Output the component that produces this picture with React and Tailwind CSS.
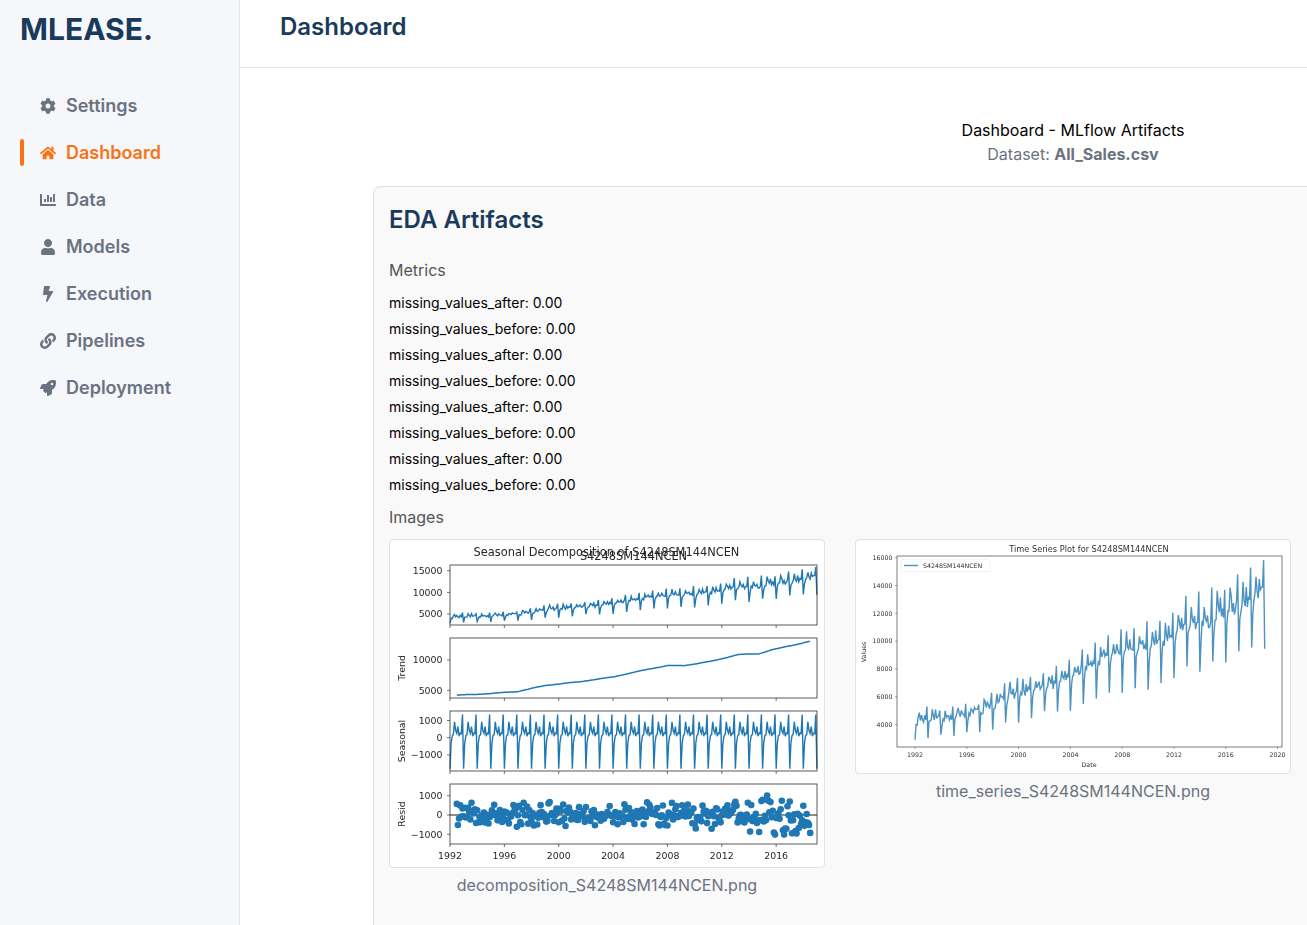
import React from 'react';
import { FaCog, FaHome, FaChartBar, FaUser, FaBolt, FaLink, FaRocket } from 'react-icons/fa';

const navItems = [
  { label: 'Settings', icon: FaCog },
  { label: 'Dashboard', icon: FaHome, active: true },
  { label: 'Data', icon: FaChartBar },
  { label: 'Models', icon: FaUser },
  { label: 'Execution', icon: FaBolt },
  { label: 'Pipelines', icon: FaLink },
  { label: 'Deployment', icon: FaRocket },
];

const metrics = Array.from({ length: 8 }, (_, i) =>
  i % 2 === 0 ? 'missing_values_after: 0.00' : 'missing_values_before: 0.00'
);

// fake-but-stable monthly series, Jan 1992 to Jan 2019
const BLUE = '#1f77b4';
const seasonalShape = [-1800, -320, 120, 180, 920, 420, 250, 640, 90, 270, 240, 1350];
const trendKnots = [
  [1992, 4150], [1995, 4450], [1996, 4650], [1997, 4800], [1999, 5800], [2001.5, 6400],
  [2004, 7200], [2006, 8200], [2008, 9100], [2009.2, 9050], [2011.5, 9900], [2013.2, 10900],
  [2014.7, 11000], [2015.7, 11700], [2017, 12300], [2018.5, 13100], [2019, 13300],
];

function trendAt(year) {
  for (let i = 1; i < trendKnots.length; i++) {
    const [x0, y0] = trendKnots[i - 1];
    const [x1, y1] = trendKnots[i];
    if (year <= x1) return y0 + ((y1 - y0) * (year - x0)) / (x1 - x0);
  }
  return 13300;
}

let seed = 4248;
function rand() {
  seed = (seed * 16807) % 2147483647;
  return seed / 2147483647;
}

const series = Array.from({ length: 325 }, (_, i) => {
  const year = 1992 + i / 12;
  const spread = year > 2014 ? 1250 : year > 2009 ? 800 : 720;
  const resid = (rand() + rand() - 1) * spread;
  const trend = trendAt(year);
  const season = seasonalShape[i % 12];
  return { year, trend, season, resid, value: trend + (season * trend) / 6500 + resid * 0.55 };
});

function linePath(points) {
  return points.map(([x, y], i) => `${i ? 'L' : 'M'}${x.toFixed(1)} ${y.toFixed(1)}`).join('');
}

const xDecomp = (year) => 450 + (year - 1992) * 13.59;

function Panel({ top, yTicks, label, labelX = 405, withYearLabels, children }) {
  const years = [1992, 1996, 2000, 2004, 2008, 2012, 2016];
  return (
    <g fontFamily="DejaVu Sans, sans-serif" fontSize="9.4" fill="#262626">
      {children}
      <rect x="450" y={top} width="367" height="60" fill="none" stroke="#333" strokeWidth="0.8" />
      {yTicks.map(([text, y]) => (
        <g key={text}>
          <line x1="447" x2="450" y1={y} y2={y} stroke="#333" strokeWidth="0.7" />
          <text x="442.5" y={y + 3.4} textAnchor="end">{text}</text>
        </g>
      ))}
      {years.map((year) => (
        <g key={year}>
          <line x1={xDecomp(year)} x2={xDecomp(year)} y1={top + 60} y2={top + 63} stroke="#333" strokeWidth="0.7" />
          {withYearLabels && (
            <text x={xDecomp(year)} y={top + 74.5} textAnchor="middle">{year}</text>
          )}
        </g>
      ))}
      {label && (
        <text transform={`translate(${labelX} ${top + 30}) rotate(-90)`} textAnchor="middle">{label}</text>
      )}
    </g>
  );
}

function DecompositionChart() {
  const observed = series.map((d) => [xDecomp(d.year), 614 - ((d.value - 5000) / 1000) * 4.33]);
  const trend = series
    .filter((d) => d.year >= 1992.5 && d.year <= 2018.5)
    .map((d) => [xDecomp(d.year), 690.3 - ((d.trend + 25 * Math.sin(d.year * 2.4) - 5000) / 1000) * 6.07]);
  const seasonal = series.map((d) => [xDecomp(d.year), 737.7 - (d.season / 1000) * 17.2]);
  const resid = series.slice(6, 319);

  return (
    <svg viewBox="390 540 434 327" className="block w-full [filter:blur(0.25px)]">
      <g fontFamily="DejaVu Sans, sans-serif" fontSize="11.4" fill="#262626">
        <text x="606.5" y="556" textAnchor="middle">Seasonal Decomposition of S4248SM144NCEN</text>
        <text x="633.5" y="560" textAnchor="middle">S4248SM144NCEN</text>
      </g>
      <Panel top={565} yTicks={[['15000', 570.7], ['10000', 592.4], ['5000', 614]]}>
        <path d={linePath(observed)} fill="none" stroke={BLUE} strokeWidth="1.4" />
      </Panel>
      <Panel top={638} label="Trend" yTicks={[['10000', 660], ['5000', 690.3]]}>
        <path d={linePath(trend)} fill="none" stroke={BLUE} strokeWidth="1.5" />
      </Panel>
      <Panel top={711} label="Seasonal" yTicks={[['1000', 720.5], ['0', 737.7], ['\u22121000', 754.9]]}>
        <path d={linePath(seasonal)} fill="none" stroke={BLUE} strokeWidth="1.4" />
      </Panel>
      <Panel top={784} label="Resid" withYearLabels yTicks={[['1000', 795.8], ['0', 815], ['\u22121000', 834.2]]}>
        <line x1="450" x2="817" y1="815" y2="815" stroke="#000" strokeWidth="0.9" />
        {resid.map((d) => (
          <circle
            key={d.year}
            cx={xDecomp(d.year)}
            cy={Math.min(842, Math.max(786, 815 - (d.resid / 1000) * 19.2))}
            r="3.3"
            fill={BLUE}
          />
        ))}
      </Panel>
    </svg>
  );
}

function TimeSeriesChart() {
  const xYear = (year) => 915 + (year - 1992) * 12.95;
  const yVal = (v) => 724.7 - ((v - 4000) / 1000) * 13.92;
  const line = series.map((d) => [xYear(d.year), yVal(d.value)]);
  const years = [1992, 1996, 2000, 2004, 2008, 2012, 2016, 2020];
  const values = [4000, 6000, 8000, 10000, 12000, 14000, 16000];

  return (
    <svg viewBox="856 540 434 233" className="block w-full [filter:blur(0.25px)]">
      <g fontFamily="DejaVu Sans, sans-serif" fontSize="6.3" fill="#333">
        <text x="1089" y="551.5" textAnchor="middle" fontSize="8.2">Time Series Plot for S4248SM144NCEN</text>
        <path d={linePath(line)} fill="none" stroke={BLUE} strokeOpacity="0.8" strokeWidth="1.4" />
        <rect x="897" y="556" width="385" height="191" fill="none" stroke="#444" strokeWidth="0.7" />
        {values.map((v) => (
          <g key={v}>
            <line x1="895" x2="897" y1={yVal(v)} y2={yVal(v)} stroke="#444" strokeWidth="0.5" />
            <text x="892.5" y={yVal(v) + 2.3} textAnchor="end">{v}</text>
          </g>
        ))}
        {years.map((year) => (
          <g key={year}>
            <line x1={xYear(year)} x2={xYear(year)} y1="747" y2="749" stroke="#444" strokeWidth="0.5" />
            <text x={xYear(year)} y="757" textAnchor="middle">{year}</text>
          </g>
        ))}
        <text x="1089" y="767" textAnchor="middle">Date</text>
        <text transform="translate(866 652) rotate(-90)" textAnchor="middle">Values</text>
        <rect x="901" y="559.5" width="89" height="12" rx="1" fill="#fff" stroke="#e5e5e5" strokeWidth="0.5" />
        <line x1="904" x2="918" y1="565.5" y2="565.5" stroke={BLUE} strokeOpacity="0.8" strokeWidth="1.4" />
        <text x="923" y="568">S4248SM144NCEN</text>
      </g>
    </svg>
  );
}

function ImageCard({ caption, children }) {
  return (
    <figure>
      <div className="bg-white border border-[#e0e0e0] rounded overflow-hidden">{children}</div>
      <figcaption className="mt-[5px] text-center text-base text-[#6b7280]">{caption}</figcaption>
    </figure>
  );
}

export default function App() {
  return (
    <div className="h-screen w-full flex overflow-hidden bg-white font-['Inter',sans-serif]">
      <aside className="w-[240px] shrink-0 bg-[#f5f7fb] border-r border-[#e5e7eb] px-5">
        <div className="text-[30px] leading-9 font-bold text-[#1a3a5c] mt-[11px] mb-[45px]">MLEASE.</div>
        <nav className="flex flex-col gap-5">
          {navItems.map(({ label, icon: Icon, active }) => (
            <a
              key={label}
              className={`relative flex items-center gap-[10px] h-[27px] pl-5 text-lg font-semibold ${
                active ? 'text-[#f97316]' : 'text-[#6b7280]'
              }`}
            >
              {active && <span className="absolute left-0 top-0 h-[27px] w-1 rounded bg-[#f97316]" />}
              <Icon className="w-4 h-4 shrink-0" />
              {label}
            </a>
          ))}
        </nav>
      </aside>

      <div className="flex-1 min-w-0">
        <header className="h-[68px] border-b border-[#e5e7eb] px-10 pt-[9px]">
          <h1 className="text-2xl leading-9 font-semibold text-[#1a3a5c]">Dashboard</h1>
        </header>
        <main className="pl-[133px] pt-[50px]">
          <div className="w-[1400px]">
            <div className="text-center text-base mb-5">
              <div className="text-black">Dashboard - MLflow Artifacts</div>
              <div className="text-[#6b7280]">
                Dataset: <span className="font-bold">All_Sales.csv</span>
              </div>
            </div>
            <section className="bg-[#f9f9f9] border border-[#e0e0e0] rounded-lg p-[15px] h-[900px]">
              <h2 className="text-2xl leading-9 font-semibold text-[#1a3a5c] mb-5">EDA Artifacts</h2>
              <h3 className="text-base text-[#555] mb-2">Metrics</h3>
              <ul className="text-sm leading-[26px] text-black mb-[7px]">
                {metrics.map((m, i) => (
                  <li key={i}>{m}</li>
                ))}
              </ul>
              <h3 className="text-base text-[#555] mb-[10px]">Images</h3>
              <div className="grid grid-cols-3 gap-[30px] items-start">
                <ImageCard caption="decomposition_S4248SM144NCEN.png">
                  <DecompositionChart />
                </ImageCard>
                <ImageCard caption="time_series_S4248SM144NCEN.png">
                  <TimeSeriesChart />
                </ImageCard>
              </div>
            </section>
          </div>
        </main>
      </div>
    </div>
  );
}
